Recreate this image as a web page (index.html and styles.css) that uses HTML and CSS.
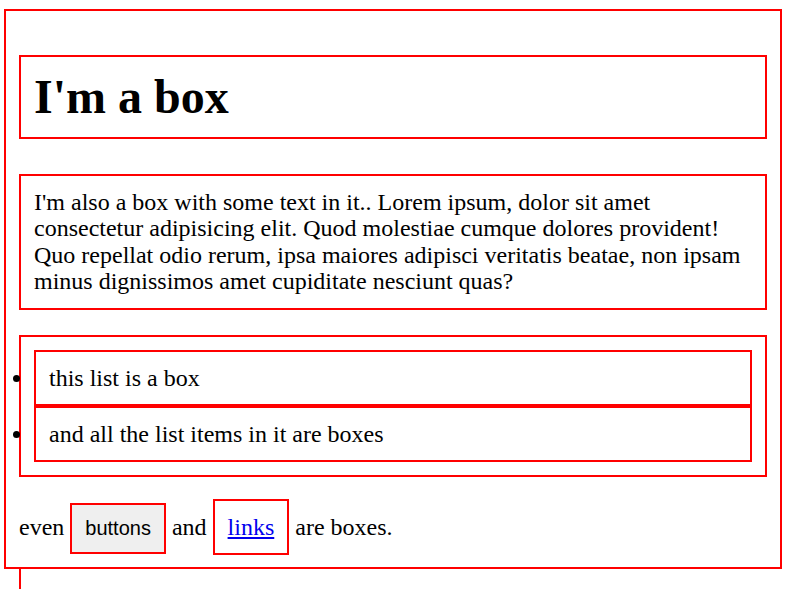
FILE: index.html
```html
<!DOCTYPE html>
<html>
<head>
<meta charset="utf-8">
<link rel="stylesheet" href="styles.css">
</head>
<body>
<div class="box">
  <h1 class="title">I'm a box</h1>
  <p class="text">I'm also a box with some text in it.. Lorem ipsum, dolor sit amet consectetur adipisicing elit. Quod molestiae cumque dolores provident! Quo repellat odio rerum, ipsa maiores adipisci veritatis beatae, non ipsam minus dignissimos amet cupiditate nesciunt quas?</p>
  <ul class="list">
    <li class="item">this list is a box</li>
    <li class="item">and all the list items in it are boxes</li>
  </ul>
  even <button class="btn">buttons</button> and <a class="link" href="#">links</a> are boxes.
</div>
<div class="next"></div>
</body>
</html>
```
FILE: styles.css
```css
html, body {
  margin: 0;
  padding: 0;
}
body {
  padding: 9px 0 0 4px;
  font-family: "Liberation Serif", "Times New Roman", serif;
  font-size: 24px;
  line-height: 26.4px;
  color: #000;
  background: #fff;
}
.box {
  box-sizing: border-box;
  width: 778px;
  border: 2px solid #ff0000;
  padding: 13px;
}
.title {
  font-size: 48px;
  line-height: 54px;
  font-weight: bold;
  margin: 31px 0 35px;
  padding: 13px;
  border: 2px solid #ff0000;
}
.text {
  margin: 35px 0 25px;
  padding: 13px;
  border: 2px solid #ff0000;
}
.list {
  margin: 25px 0 26px;
  padding: 13px;
  border: 2px solid #ff0000;
}
.item {
  padding: 13px;
  border: 2px solid #ff0000;
}
.btn {
  font-family: "Liberation Sans", Arial, sans-serif;
  font-size: 20px;
  line-height: 21px;
  color: #000;
  background: #efefef;
  border: 2px solid #ff0000;
  padding: 13px;
  margin: 0;
}
.link {
  color: #0000ee;
  padding: 13px;
  border: 2px solid #ff0000;
}
.next {
  margin-left: 15px;
  height: 40px;
  border-left: 2px solid #ff0000;
}
```
